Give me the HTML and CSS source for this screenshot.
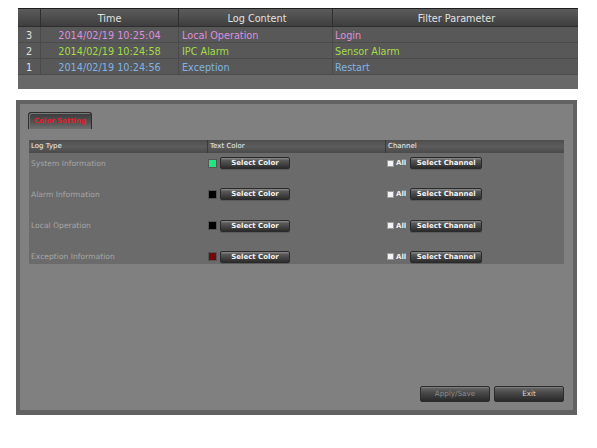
FILE: index.html
```html
<!DOCTYPE html>
<html>
<head>
<meta charset="utf-8">
<link rel="stylesheet" href="styles.css">
</head>
<body>
<div class="page">
  <div class="log-table">
    <div class="lt-row lt-head">
      <div class="c c-num"></div>
      <div class="c c-time">Time</div>
      <div class="c c-content">Log Content</div>
      <div class="c c-filter">Filter Parameter</div>
    </div>
    <div class="lt-row pink">
      <div class="c c-num">3</div>
      <div class="c c-time">2014/02/19 10:25:04</div>
      <div class="c c-content">Local Operation</div>
      <div class="c c-filter">Login</div>
    </div>
    <div class="lt-row green">
      <div class="c c-num">2</div>
      <div class="c c-time">2014/02/19 10:24:58</div>
      <div class="c c-content">IPC Alarm</div>
      <div class="c c-filter">Sensor Alarm</div>
    </div>
    <div class="lt-row blue">
      <div class="c c-num">1</div>
      <div class="c c-time">2014/02/19 10:24:56</div>
      <div class="c c-content">Exception</div>
      <div class="c c-filter">Restart</div>
    </div>
    <div class="lt-foot"></div>
  </div>

  <div class="settings">
    <div class="tabs">
      <div class="tab">Color Setting</div>
    </div>
    <div class="cs-table">
      <div class="cs-head">
        <div class="h">Log Type</div>
        <div class="h">Text Color</div>
        <div class="h">Channel</div>
      </div>
      <div class="cs-body">
        <div class="cs-row">
          <div class="label">System Information</div>
          <div class="color-cell"><span class="swatch sw-green"></span><span class="btn btn-color">Select Color</span></div>
          <div class="chan-cell"><span class="check"></span><span class="all">All</span><span class="btn btn-chan">Select Channel</span></div>
        </div>
        <div class="cs-row">
          <div class="label">Alarm Information</div>
          <div class="color-cell"><span class="swatch sw-black"></span><span class="btn btn-color">Select Color</span></div>
          <div class="chan-cell"><span class="check"></span><span class="all">All</span><span class="btn btn-chan">Select Channel</span></div>
        </div>
        <div class="cs-row">
          <div class="label">Local Operation</div>
          <div class="color-cell"><span class="swatch sw-black"></span><span class="btn btn-color">Select Color</span></div>
          <div class="chan-cell"><span class="check"></span><span class="all">All</span><span class="btn btn-chan">Select Channel</span></div>
        </div>
        <div class="cs-row">
          <div class="label">Exception Information</div>
          <div class="color-cell"><span class="swatch sw-red"></span><span class="btn btn-color">Select Color</span></div>
          <div class="chan-cell"><span class="check"></span><span class="all">All</span><span class="btn btn-chan">Select Channel</span></div>
        </div>
      </div>
    </div>
    <div class="actions">
      <span class="btn btn-big disabled">Apply/Save</span>
      <span class="btn btn-big">Exit</span>
    </div>
  </div>
</div>
</body>
</html>
```
FILE: styles.css
```css
html, body {
  margin: 0;
  padding: 0;
  background: #ffffff;
}
.page {
  width: 597px;
  height: 448px;
  padding-top: 8px;
  box-sizing: border-box;
  font-family: "DejaVu Sans", Verdana, sans-serif;
}

/* top log table */
.log-table {
  margin-left: 18px;
  width: 560px;
  height: 81px;
  background: #5f5f5f;
  border-top: 1px solid #1e1e1e;
  box-sizing: border-box;
  display: flex;
  flex-direction: column;
}
.lt-row {
  display: grid;
  grid-template-columns: 22px 138px 154px 1fr;
  height: 16px;
  font-size: 9.7px;
  line-height: 17px;
  background: #585858;
  border-bottom: 1px solid #4b4b4b;
  box-sizing: border-box;
}
.lt-row .c {
  border-left: 1px solid #4a4a4a;
  white-space: nowrap;
}
.lt-row .c:first-child { border-left: none; }
.lt-head {
  height: 18px;
  line-height: 14px;
  background: linear-gradient(#5c5c5c, #3e3e3e);
  color: #e2e2e2;
  border-bottom: 1px solid #2e2e2e;
}
.lt-head .c {
  border-left-color: #2f2f2f;
  text-align: center;
  padding-top: 3px;
}
.lt-head .c-filter { text-align: center; }
.c-num { padding-left: 8px; color: #e0e0e0; }
.c-time { text-align: center; }
.c-content { padding-left: 3px; }
.c-filter { padding-left: 2px; }
.pink .c-time, .pink .c-content, .pink .c-filter { color: #de8fdc; }
.green .c-time, .green .c-content, .green .c-filter { color: #a4dc48; }
.blue .c-time, .blue .c-content, .blue .c-filter { color: #80b3e2; }
.lt-foot {
  flex: 1;
  background: #686868;
}

/* settings panel */
.settings {
  margin-top: 11px;
  margin-left: 16px;
  width: 561px;
  height: 315px;
  box-sizing: border-box;
  background: #808080;
  border: 4px solid #626262;
  border-bottom-width: 5px;
  display: flex;
  flex-direction: column;
  padding: 8px 9px 8px 9px;
}
.tabs {
  display: flex;
  height: 17px;
  margin-bottom: 11px;
}
.tab {
  margin-left: -1px;
  width: 64px;
  height: 17px;
  box-sizing: border-box;
  border: 1px solid #2e2e2e;
  border-bottom: none;
  border-radius: 3px 3px 0 0;
  background: linear-gradient(#3a3a3a, #555555 60%, #6e6e6e);
  color: #e0202c;
  font-size: 7px;
  font-weight: bold;
  line-height: 16px;
  text-align: center;
  white-space: nowrap;
  box-shadow: inset 1px 1px 0 #777;
}
.cs-table {
  width: 535px;
}
.cs-head {
  display: grid;
  grid-template-columns: 178px 178px 1fr;
  height: 13px;
  background: linear-gradient(#4e4e4e, #5c5c5c 50%, #4a4a4a);
  color: #f0f0f0;
  font-size: 7px;
  line-height: 13px;
}
.cs-head .h {
  padding-left: 2px;
  border-left: 1px solid #3a3a3a;
}
.cs-head .h:first-child { border-left: none; }
.cs-body {
  background: #6b6b6b;
  height: 111px;
  box-sizing: border-box;
  padding-top: 4px;
  display: flex;
  flex-direction: column;
  gap: 19.3px;
}
.cs-row {
  display: grid;
  grid-template-columns: 178px 178px 1fr;
  height: 12px;
  align-items: center;
}
.label {
  padding-left: 2px;
  color: #a6a6a6;
  font-size: 7.6px;
  white-space: nowrap;
}
.color-cell, .chan-cell {
  display: flex;
  align-items: center;
}
.swatch {
  display: inline-block;
  width: 9px;
  height: 9px;
  margin-left: 1px;
  margin-right: 3px;
  box-sizing: border-box;
  border: 1px solid #555;
}
.sw-green { background: #1fe87e; }
.sw-black { background: #000000; }
.sw-red { background: #6e0a0a; }
.btn {
  display: inline-block;
  box-sizing: border-box;
  text-align: center;
  color: #f2f2f2;
  font-weight: bold;
  font-size: 7px;
  white-space: nowrap;
  background: linear-gradient(#8a8a8a, #575757 25%, #3e3e3e 70%, #2c2c2c);
  border: 1px solid #2a2a2a;
  border-radius: 2px;
  box-shadow: 0 1px 0 #5a5a5a;
}
.btn-color {
  width: 70px;
  height: 12px;
  line-height: 10px;
}
.chan-cell { padding-left: 2px; }
.check {
  display: inline-block;
  width: 7px;
  height: 7px;
  background: #f4f4f4;
  border: 1px solid #9a9a9a;
  box-sizing: border-box;
}
.all {
  color: #f0f0f0;
  font-size: 7px;
  font-weight: bold;
  margin-left: 2px;
  margin-right: 4px;
}
.btn-chan {
  width: 72px;
  height: 12px;
  line-height: 10px;
}
.actions {
  margin-top: auto;
  display: flex;
  justify-content: flex-end;
  gap: 4px;
  padding-right: 0;
}
.btn-big {
  width: 70px;
  height: 16px;
  line-height: 14px;
  font-weight: normal;
  font-size: 7.2px;
  color: #dadada;
  background: linear-gradient(#6a6a6a, #4a4a4a 40%, #333 80%, #2a2a2a);
  border: 1px solid #2c2c2c;
  box-shadow: inset 0 1px 0 #7a7a7a;
}
.btn-big.disabled { color: #8c8c8c; }
```
